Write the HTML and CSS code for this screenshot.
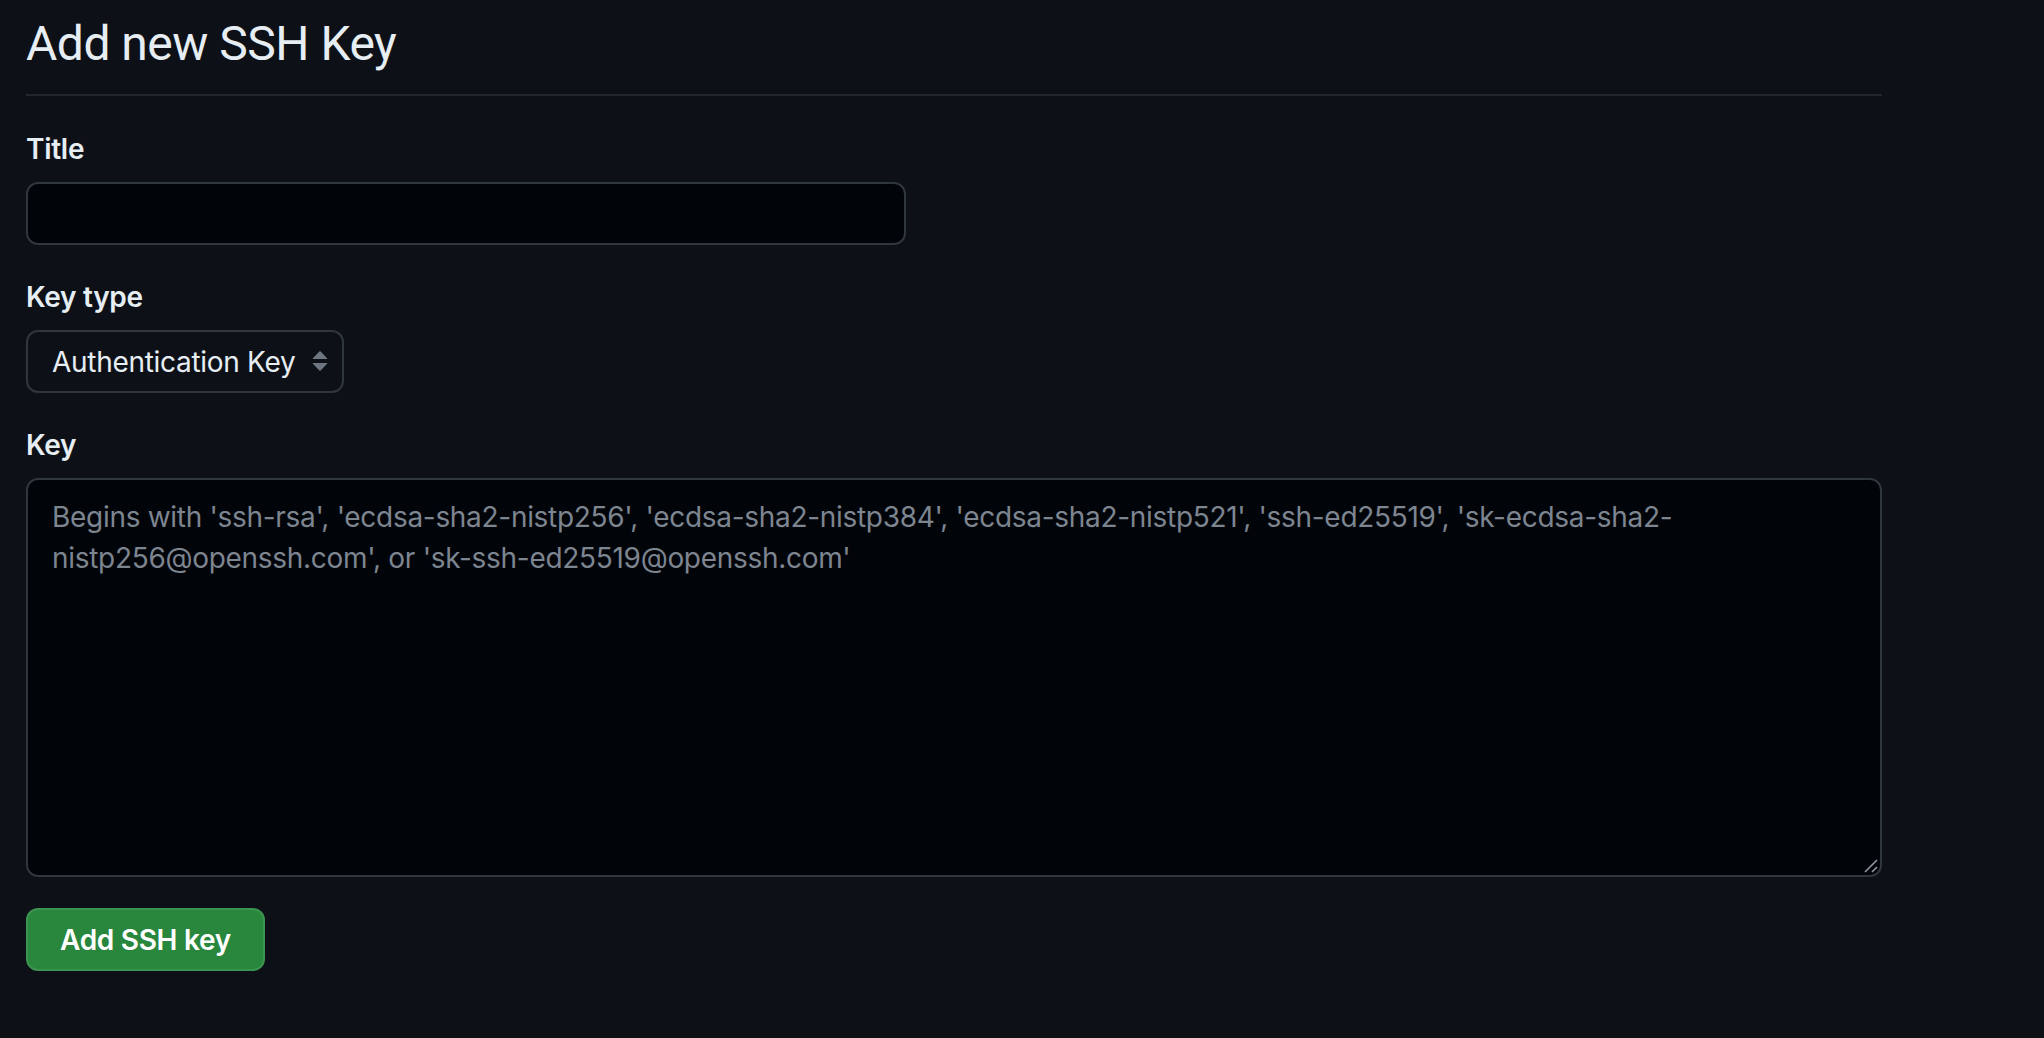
FILE: index.html
```html
<!DOCTYPE html>
<html lang="en">
<head>
<meta charset="utf-8">
<title>Add new SSH Key</title>
<link rel="stylesheet" href="styles.css">
</head>
<body>
<main class="page">
  <div class="subhead">
    <h2 class="subhead-heading">Add new SSH Key</h2>
  </div>
  <form class="ssh-form">
    <div class="form-group">
      <label class="form-label" for="title">Title</label>
      <input class="form-input title-input" id="title" type="text">
    </div>
    <div class="form-group">
      <label class="form-label" for="keytype">Key type</label>
      <div class="select-wrap">
        <select class="form-select" id="keytype">
          <option>Authentication Key</option>
          <option>Signing Key</option>
        </select>
        <svg class="select-arrow" width="32" height="32" viewBox="0 0 16 16" aria-hidden="true">
          <path d="M4.427 9.427l3.396 3.396a.25.25 0 00.354 0l3.396-3.396A.25.25 0 0011.396 9H4.604a.25.25 0 00-.177.427zM4.427 6.573l3.396-3.396a.25.25 0 01.354 0l3.396 3.396A.25.25 0 0111.396 7H4.604a.25.25 0 01-.177-.427z"></path>
        </svg>
      </div>
    </div>
    <div class="form-group">
      <label class="form-label" for="key">Key</label>
      <div class="textarea-wrap">
        <textarea class="form-textarea" id="key" placeholder="Begins with 'ssh-rsa', 'ecdsa-sha2-nistp256', 'ecdsa-sha2-nistp384', 'ecdsa-sha2-nistp521', 'ssh-ed25519', 'sk-ecdsa-sha2-&#10;nistp256@openssh.com', or 'sk-ssh-ed25519@openssh.com'"></textarea>
        <svg class="resize-grip" width="14" height="14" viewBox="0 0 14 14" aria-hidden="true">
          <path d="M1 13L13 1M8 13L13 8"></path>
        </svg>
      </div>
    </div>
    <button class="btn-primary" type="button">Add SSH key</button>
  </form>
</main>
</body>
</html>
```

FILE: styles.css
```css
html, body {
  margin: 0;
  padding: 0;
  background: #0d1117;
  color-scheme: dark;
}

body {
  font-family: Inter, Roboto, "Liberation Sans", Arial, sans-serif;
  color: #e6edf3;
}

.page {
  padding-left: 26px;
  width: 1856px;
}

.subhead {
  padding-top: 14px;
  padding-bottom: 20px;
  border-bottom: 2px solid #21262d;
}

.subhead-heading {
  margin: 0;
  font-family: Roboto, "Liberation Sans", Arial, sans-serif;
  font-size: 48px;
  line-height: 60px;
  font-weight: 400;
  letter-spacing: -0.5px;
  color: #e6edf3;
}

.ssh-form {
  display: flex;
  flex-direction: column;
  align-items: flex-start;
  padding-top: 33px;
}

.form-group {
  display: flex;
  flex-direction: column;
  align-items: flex-start;
  margin-bottom: 32px;
  width: 100%;
}

.form-group:last-of-type {
  margin-bottom: 31px;
}

.form-label {
  font-size: 28px;
  line-height: 40px;
  font-weight: 600;
  letter-spacing: -0.3px;
  color: #e6edf3;
  margin-bottom: 13px;
}

.form-input,
.form-select,
.form-textarea {
  box-sizing: border-box;
  font-family: Inter, Roboto, "Liberation Sans", Arial, sans-serif;
  font-size: 28px;
  letter-spacing: -0.3px;
  color: #e6edf3;
  border: 2px solid #30363d;
  border-radius: 12px;
  outline: none;
  margin: 0;
}

.title-input {
  width: 880px;
  height: 63px;
  padding: 0 24px;
  background: #010409;
}

.select-wrap {
  position: relative;
  width: 318px;
}

.form-select {
  -webkit-appearance: none;
  appearance: none;
  width: 318px;
  height: 63px;
  padding: 0 36px 0 24px;
  background: #0d1117;
  line-height: 40px;
}

.select-arrow {
  position: absolute;
  right: 8px;
  top: 15px;
  fill: #6e7681;
  pointer-events: none;
}

.textarea-wrap {
  position: relative;
  width: 1856px;
}

.form-textarea {
  width: 1856px;
  height: 399px;
  padding: 17px 24px;
  line-height: 41px;
  background: #010409;
  resize: none;
  display: block;
}

.form-textarea::placeholder {
  color: #7d8590;
  opacity: 1;
}

.resize-grip {
  position: absolute;
  right: 4px;
  bottom: 4px;
  stroke: #9198a1;
  stroke-width: 1.6;
  fill: none;
  pointer-events: none;
}

.btn-primary {
  box-sizing: border-box;
  height: 63px;
  padding: 0 32px;
  font-family: Inter, Roboto, "Liberation Sans", Arial, sans-serif;
  font-size: 28px;
  font-weight: 600;
  letter-spacing: -0.3px;
  line-height: 40px;
  color: #ffffff;
  background: #29873d;
  border: 2px solid #3b9550;
  border-radius: 12px;
  cursor: pointer;
}
```
